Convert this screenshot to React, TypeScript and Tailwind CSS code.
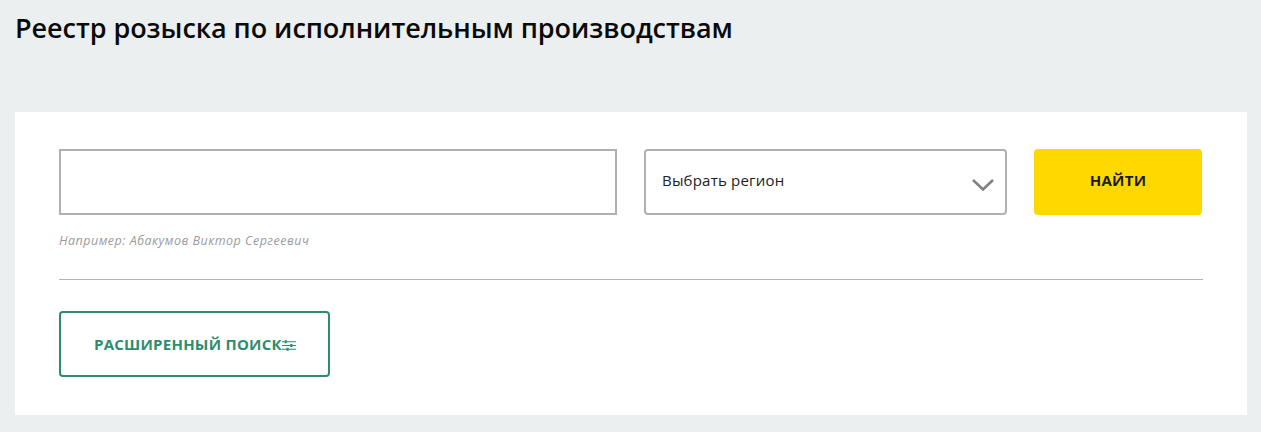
export default function App() {
  return (
    <div className="h-[432px] overflow-hidden bg-[#ebeff0] px-[15px] pt-[10px] font-['Open_Sans',sans-serif]">
      <h1 className="h-[102px] text-[27px] leading-[36px] font-semibold tracking-[-0.05px] text-[#0a0a0a]">
        Реестр розыска по исполнительным производствам
      </h1>

      <div className="h-[303px] w-[1232px] bg-white px-[44px] pt-[37px]">
        <div className="flex gap-[27px]">
          <input className="h-[66px] w-[558px] border-2 border-[#b0b0b0] bg-white outline-none" />

          <div className="flex h-[66px] w-[363px] items-center justify-between rounded-[4px] border-2 border-[#b0b0b0] pl-[16px] pr-[10px]">
            <span className="mb-[3px] text-[15px] tracking-[0.2px] text-[#222222]">Выбрать регион</span>
            <svg width="24" height="14" viewBox="0 0 24 14" fill="none" className="mt-[5px]">
              <path d="M2 2l10 9.5L22 2" stroke="#808080" strokeWidth="2.6" />
            </svg>
          </div>

          <button className="h-[66px] w-[168px] rounded-[4px] bg-[#ffd800] pb-[3px] text-[15px] font-bold tracking-[0.25px] text-[#1a1a1a]">
            НАЙТИ
          </button>
        </div>

        <p className="mt-[18px] text-[12.5px] leading-[16px] tracking-[0.5px] text-[#9b9b9b] italic">
          Например: Абакумов Виктор Сергеевич
        </p>

        <div className="mt-[30px] h-px w-[1144px] bg-[#b4b4b4]" />

        <button className="mt-[31px] flex h-[66px] w-[271px] items-center rounded-[4px] border-2 border-[#2c8c6e] pl-[33px] pt-[1px] text-[15px] font-bold tracking-[0.25px] text-[#2c8c6e]">
          РАСШИРЕННЫЙ ПОИСК
          <svg width="14" height="13" viewBox="0 0 15 13" fill="none" className="mt-[1px] shrink-0" stroke="#2c8c6e">
            <path d="M0 2.5h15M0 6.5h15M0 10.5h15" strokeWidth="1.3" />
            <path d="M4 1v3M10 5v3M6 9v3" strokeWidth="2.4" />
          </svg>
        </button>
      </div>
    </div>
  );
}
